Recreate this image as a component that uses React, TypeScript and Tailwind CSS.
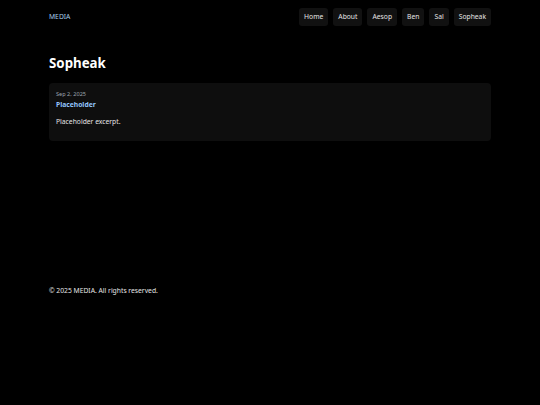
const links = ["Home", "About", "Aesop", "Ben", "Sal", "Sopheak"];

export default function App() {
  return (
    <div className="min-h-screen bg-black text-white font-['Noto_Sans',sans-serif]">
      <div className="mx-auto w-[442px]">
        <header className="flex h-[34px] items-center justify-between">
          <span className="text-[6.75px] text-[#a5cdea]">MEDIA</span>
          <nav className="flex gap-[5px]">
            {links.map((l) => (
              <a
                key={l}
                className="flex h-[18px] items-center rounded-[3px] bg-[#111111] px-[5px] text-[6.75px] text-[#e5e5e5]"
              >
                {l}
              </a>
            ))}
          </nav>
        </header>

        <main className="min-h-[240px] pt-[17px]">
          <h1 className="text-[13.3px] font-bold leading-[24px]">Sopheak</h1>
          <article className="mt-[8px] rounded-[4px] bg-[#0e0e0e] px-[7px] pb-[14px] pt-[6px]">
            <p className="text-[5.6px] leading-[10px] text-[#9ca3af]">Sep 2, 2025</p>
            <a className="block text-[6.75px] font-bold leading-[11px] text-[#93c5fd]">
              Placeholder
            </a>
            <p className="mt-[6px] text-[6.75px] leading-[11px] text-[#e5e5e5]">
              Placeholder excerpt.
            </p>
          </article>
        </main>

        <footer className="pt-[12px] text-[6.75px] text-[#e5e5e5]">
          © 2025 MEDIA. All rights reserved.
        </footer>
      </div>
    </div>
  );
}
